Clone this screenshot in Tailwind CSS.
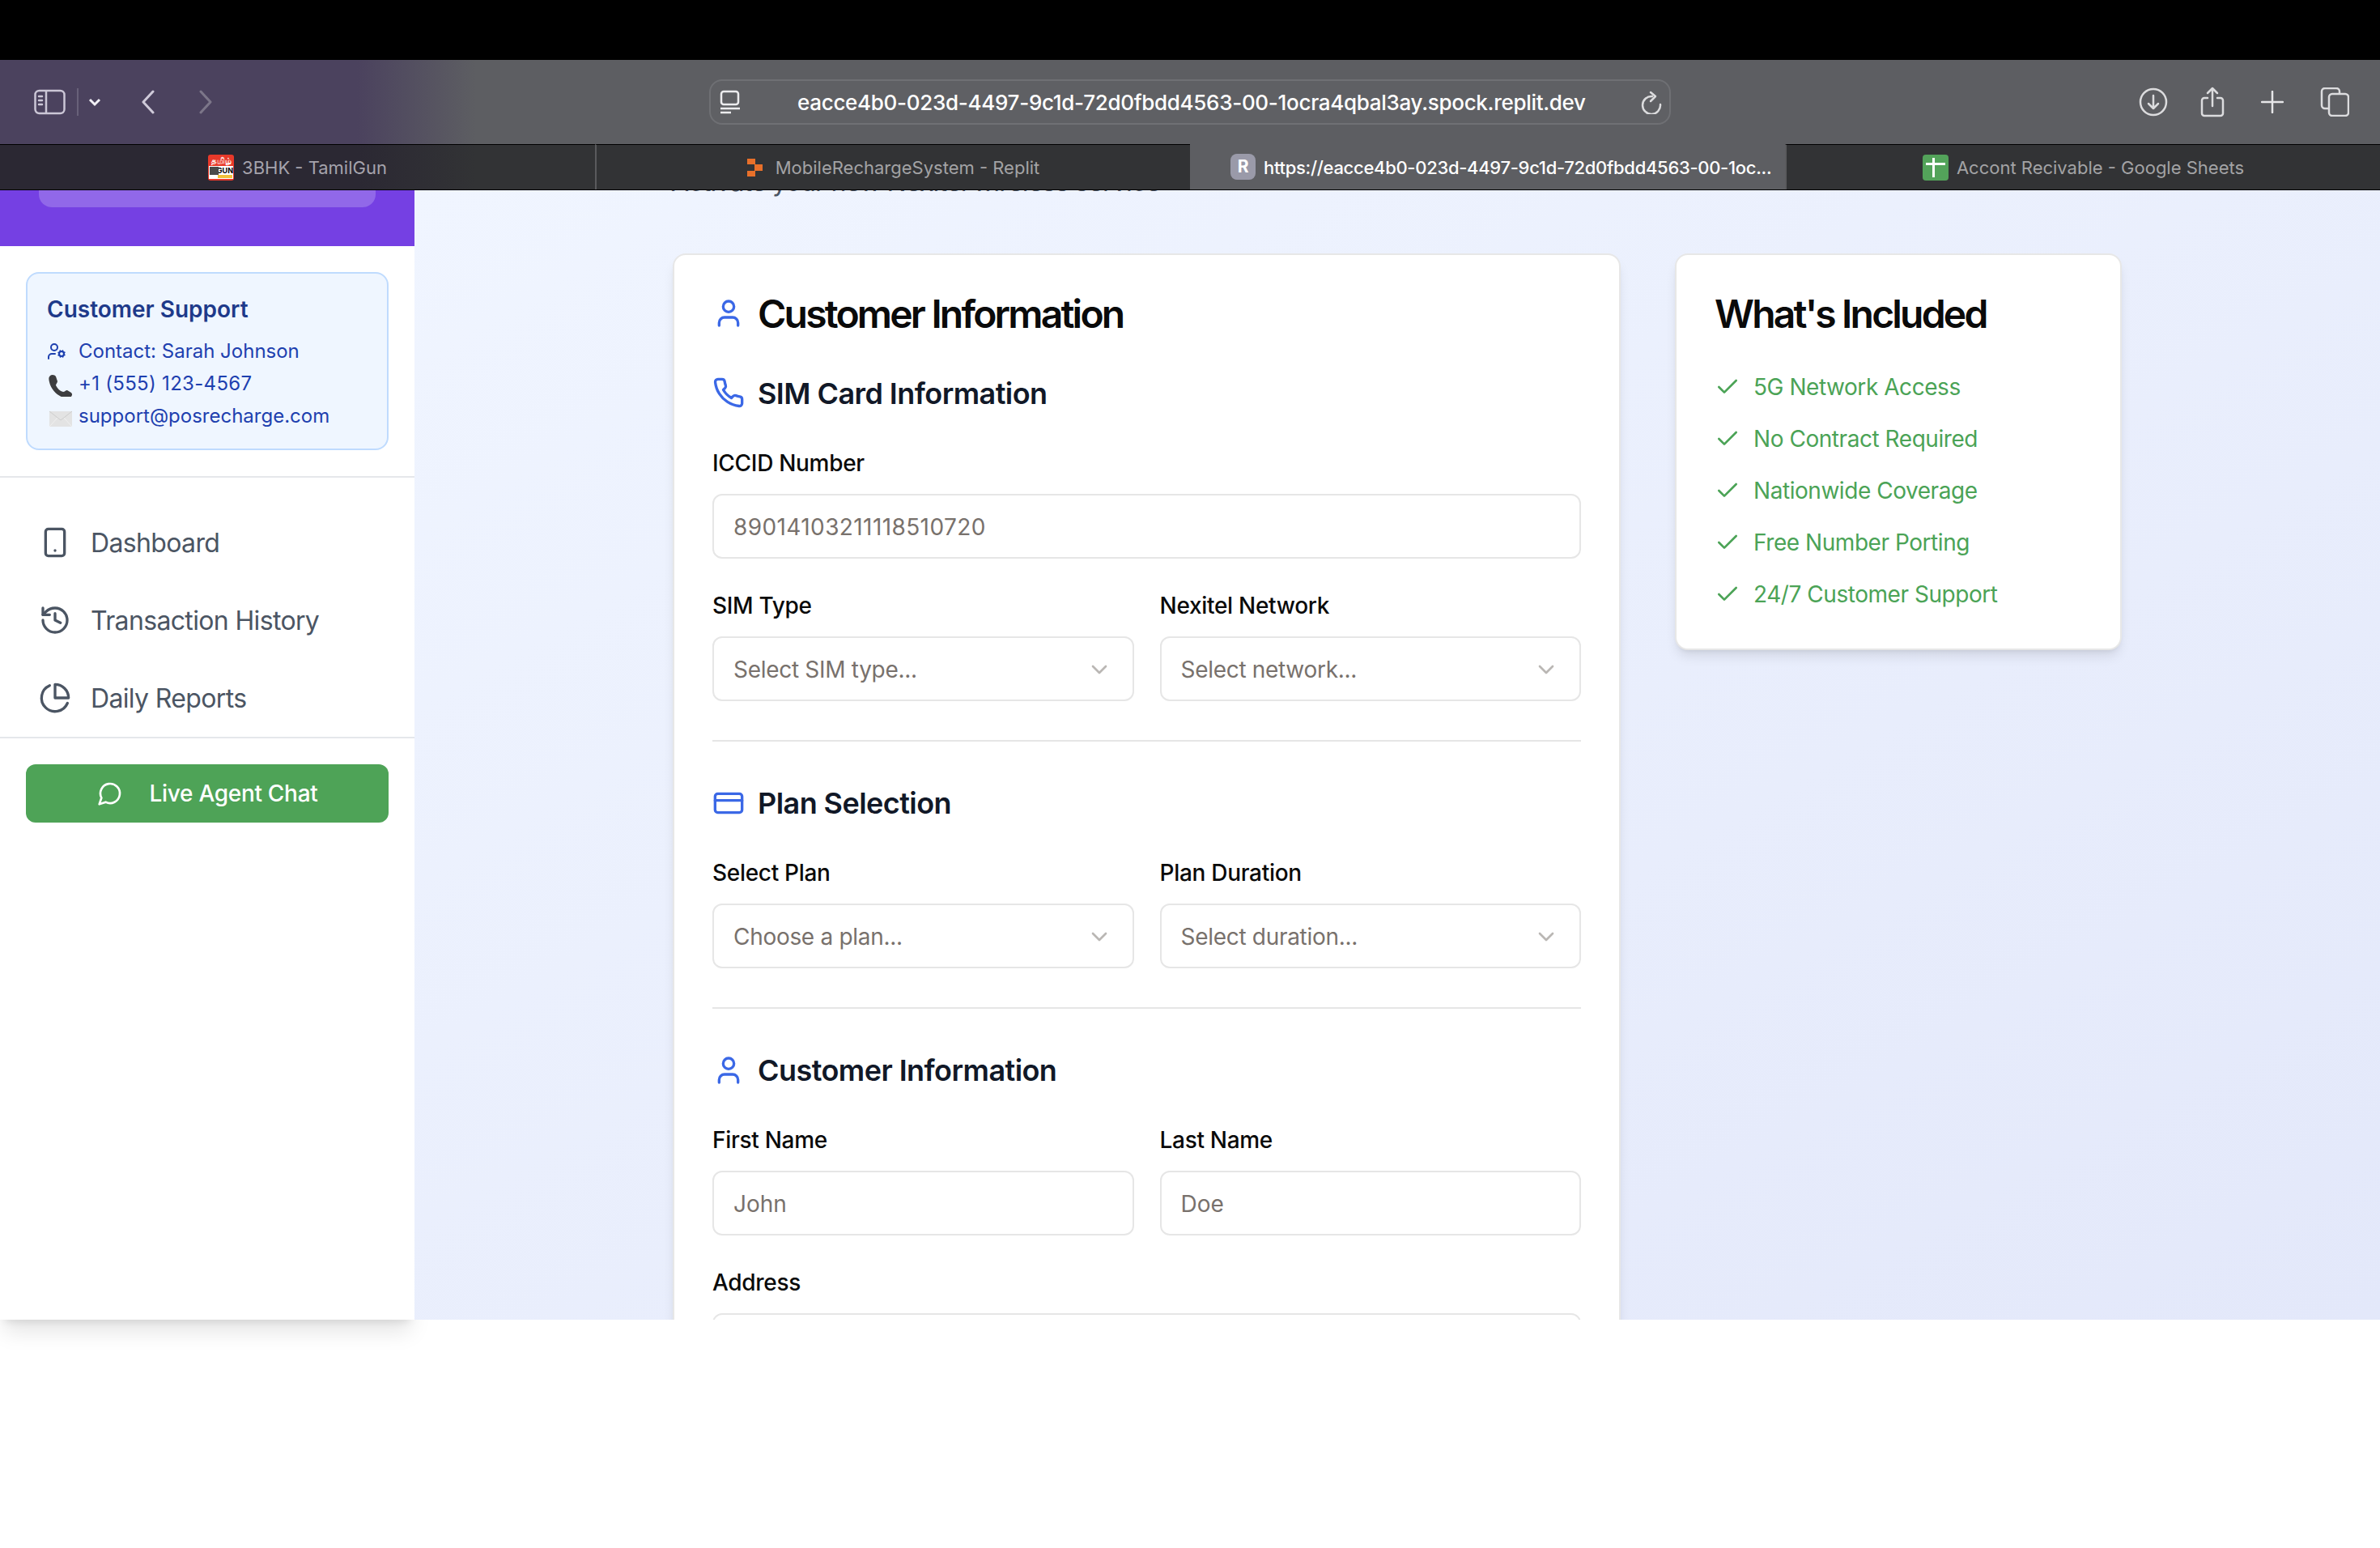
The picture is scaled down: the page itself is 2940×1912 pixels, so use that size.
<!DOCTYPE html>
<html lang="en">
<head>
  <meta charset="UTF-8" />
  <title>Activate - POS Recharge</title>
  <script src="https://cdn.jsdelivr.net/npm/@tailwindcss/browser@4"></script>
</head>
<body class="w-[2940px] h-[1912px] bg-white overflow-hidden font-[Inter,sans-serif]">
  <div class="h-[74px] bg-black"></div>

  <!-- browser toolbar -->
  <div class="h-[104px] flex items-center bg-linear-to-r from-[#4b425e] from-15% to-[#5d5e62] to-20%">
    <div class="w-[876px] flex-none flex items-center pl-[42px]">
      <svg class="w-[39px] h-[32px] flex-none" viewBox="0 0 39 32" fill="none" stroke="#cbc6d6" stroke-width="2.5"><rect x="1.5" y="2" width="36" height="28" rx="5"/><path d="M15 2v28"/><path d="M6 9h4M6 14h4M6 19h4" stroke-linecap="round"/></svg>
      <div class="w-[2px] h-[34px] bg-[#686179] ml-[14px]"></div>
      <svg class="w-[16px] h-[12px] ml-[12px] flex-none" viewBox="0 0 16 12" fill="none" stroke="#f2f0f6" stroke-width="3"><path d="m2 3 6 6 6-6"/></svg>
      <svg class="w-[18px] h-[30px] ml-[49px] flex-none" viewBox="0 0 18 30" fill="none" stroke="#cfcad9" stroke-width="3" stroke-linecap="round" stroke-linejoin="round"><path d="M15 2 3 15l12 13"/></svg>
      <svg class="w-[18px] h-[30px] ml-[53px] flex-none" viewBox="0 0 18 30" fill="none" stroke="#7c7689" stroke-width="3" stroke-linecap="round" stroke-linejoin="round"><path d="m3 2 12 13L3 28"/></svg>
    </div>
    <div class="w-[1188px] h-[56px] flex-none flex items-center rounded-[16px] border-2 border-[#6f7074] bg-[#5f6064]">
      <svg class="w-[26px] h-[30px] ml-[11px] flex-none" viewBox="0 0 26 30" fill="none" stroke="#ececee" stroke-width="2.5"><rect x="2" y="2" width="21" height="16" rx="3"/><path d="M1 23h24"/><path d="M1 28h13"/></svg>
      <span class="ml-[70px] text-[26px] tracking-[-0.3px] font-medium text-white whitespace-nowrap">eacce4b0-023d-4497-9c1d-72d0fbdd4563-00-1ocra4qbal3ay.spock.replit.dev</span>
      <svg class="w-[26px] h-[30px] ml-auto mr-[9px] flex-none" viewBox="0 0 26 30" fill="none" stroke="#dcdcde" stroke-width="2.500" stroke-linecap="round" stroke-linejoin="round"><path d="M24 18A11 11 0 1 1 14 8"/><path d="m12 3 6 5-6 6"/></svg>
    </div>
    <div class="flex-1 flex items-center pl-[578px]">
      <svg class="w-[36px] h-[36px] flex-none" viewBox="0 0 36 36" fill="none" stroke="#dcdcde" stroke-width="2.500" stroke-linecap="round" stroke-linejoin="round"><circle cx="18" cy="18" r="16"/><path d="M18 10v16M12 20l6 6 6-6"/></svg>
      <svg class="w-[32px] h-[38px] ml-[39px] flex-none" viewBox="0 0 32 38" fill="none" stroke="#dcdcde" stroke-width="2.500" stroke-linecap="round" stroke-linejoin="round"><path d="M10 14H6a3 3 0 0 0-3 3v16a3 3 0 0 0 3 3h20a3 3 0 0 0 3-3V17a3 3 0 0 0-3-3h-4"/><path d="M16 24V2M10 8l6-6 6 6"/></svg>
      <svg class="w-[28px] h-[28px] ml-[44px] flex-none" viewBox="0 0 28 28" fill="none" stroke="#e6e6e8" stroke-width="2.500" stroke-linecap="round"><path d="M14 1v26M1 14h26"/></svg>
      <svg class="w-[36px] h-[36px] ml-[45px] flex-none" viewBox="0 0 36 36" fill="none" stroke="#dcdcde" stroke-width="2.500"><rect x="11" y="8" width="24" height="27" rx="4"/><path d="M11 26H6a4 4 0 0 1-4-4V5a4 4 0 0 1 4-4h14a4 4 0 0 1 4 4v3"/></svg>
    </div>
  </div>

  <!-- browser tabs -->
  <div class="h-[57px] grid grid-cols-4 border-b border-black bg-linear-to-r from-[#2b2833] from-15% to-[#323335] to-20% text-[22px] whitespace-nowrap">
    <div class="flex items-center justify-center gap-[10px] border-t border-black text-[#a5a3ac]">
      <span class="relative w-[32px] h-[32px] flex-none rounded-[3px] bg-[#e8392a] overflow-hidden">
        <span class="block h-[14px] text-[10px] leading-[14px] font-bold text-white text-center font-['Noto_Sans',sans-serif]">தமிழ்</span>
        <span class="absolute left-[1px] right-[1px] top-[14px] h-[16px] bg-white text-[9px] leading-[11px] font-bold text-black text-right">GUN</span>
        <span class="absolute left-[2px] top-[15px] w-[11px] h-[10px] bg-[#4a4a4a]"></span>
        <span class="absolute left-[12px] right-[2px] bottom-[3px] h-[4px] bg-[#f0c13a]"></span>
      </span>
      <span class="pt-[2px]">3BHK - TamilGun</span>
    </div>
    <div class="flex items-center justify-center gap-[16px] border-t border-l-2 border-t-black border-l-[#5a5a5d] text-[#a3a3a5]">
      <svg class="w-[19px] h-[22px] flex-none" viewBox="0 0 19 22" fill="#e8702a"><path d="M0 0h10v7H0zM9 7h10v8H9zM0 15h10v7H0z"/></svg>
      <span class="pt-[2px]">MobileRechargeSystem - Replit</span>
    </div>
    <div class="flex items-center pl-[50px] gap-[10px] bg-[#5d5e62] text-white font-medium tracking-[-0.3px]">
      <span class="w-[31px] h-[32px] flex-none flex items-center justify-center rounded-[8px] bg-[#9a9aa9] text-[21px] font-bold">R</span>
      <span class="pt-[2px]">https://eacce4b0-023d-4497-9c1d-72d0fbdd4563-00-1oc...</span>
    </div>
    <div class="flex items-center justify-center gap-[10px] border-t border-l-2 border-t-black border-l-[#5a5a5d] text-[#a3a3a5]">
      <span class="relative w-[32px] h-[32px] flex-none rounded-[4px] bg-[#53a35a]">
        <span class="absolute left-[4px] right-[4px] top-[10px] h-[3px] bg-white"></span>
        <span class="absolute left-[12px] top-[4px] bottom-[4px] w-[3px] bg-white"></span>
      </span>
      <span class="pt-[2px]">Accont Recivable - Google Sheets</span>
    </div>
  </div>

  <!-- page -->
  <div class="h-[1395px] flex">
    <aside class="w-[512px] flex-none bg-white shadow-xl">
      <div class="h-[69px] bg-[#7540e3] px-[48px]">
        <div class="h-[21px] rounded-b-[16px] bg-[#9168e9]"></div>
      </div>
      <div class="p-[32px]">
        <div class="h-[220px] rounded-[16px] border-2 border-[#bfdbfe] bg-[#eff6ff] px-[24px] pt-[24px] text-[#1e40af]">
          <h3 class="h-[40px] mb-[16px] text-[28px] leading-[40px] font-semibold text-[#1e3a8a]">Customer Support</h3>
          <div class="flex flex-col gap-[8px] text-[24px] leading-[32px]">
            <div class="flex items-center">
              <svg class="w-[24px] h-[24px] mr-[15px] flex-none" viewBox="0 0 24 24" fill="none" stroke="currentColor" stroke-width="2" stroke-linecap="round" stroke-linejoin="round"><circle cx="18" cy="15" r="3"/><circle cx="9" cy="7" r="4"/><path d="M10 15H6a4 4 0 0 0-4 4v2"/><path d="m21.700 16.400-.9-.3M15.200 13.900l-.9-.3M16.600 18.700l.3-.9M19.100 12.200l.3-.9M19.600 18.700l-.4-1M16.800 12.300l-.4-1M14.300 16.600l1-.4M20.700 13.800l1-.4"/></svg>
              <span>Contact: Sarah Johnson</span>
            </div>
            <div class="flex items-center">
              <svg class="w-[32px] h-[32px] mr-[7px] flex-none" viewBox="0 0 32 32"><path d="M4 6C6 4 10 5 11 7L13 13C13 15 11 16 11 18C13 22 16 25 20 26C22 26 23 24 25 24L30 27C32 29 31 31 29 33C27 34 23 34 20 33C12 30 5 23 3 14C2 10 2 8 4 6Z" fill="#3d3d3f"/></svg>
              <span class="tracking-[0.3px]">+1 (555) 123-4567</span>
            </div>
            <div class="flex items-center">
              <svg class="w-[32px] h-[32px] mr-[7px] flex-none overflow-visible" viewBox="0 0 32 32"><rect x="3" y="10" width="28" height="19" fill="#e3e3e3"/><path d="M3 10 17 21 31 10" fill="none" stroke="#cdcdcd" stroke-width="1"/><path d="M3 29l10-11M31 29 21 18" fill="none" stroke="#f1f1f1" stroke-width="1"/></svg>
              <span>support@posrecharge.com</span>
            </div>
          </div>
        </div>
      </div>
      <div class="border-t-2 border-[#e5e7eb] px-[48px] pt-[32px] text-[32px] tracking-[-0.65px] text-[#4b5563]">
        <a class="h-[96px] flex items-center gap-[24px]">
          <svg class="w-[40px] h-[40px] flex-none" viewBox="0 0 24 24" fill="none" stroke="currentColor" stroke-width="2" stroke-linecap="round" stroke-linejoin="round"><rect width="14" height="20" x="5" y="2" rx="2"/><path d="M12 18h.01"/></svg>
          <span class="pt-[2px]">Dashboard</span>
        </a>
        <a class="h-[96px] flex items-center gap-[24px]">
          <svg class="w-[40px] h-[40px] flex-none" viewBox="0 0 24 24" fill="none" stroke="currentColor" stroke-width="2" stroke-linecap="round" stroke-linejoin="round"><path d="M3 12a9 9 0 1 0 9-9 9.750 9.750 0 0 0-6.740 2.740L3 8"/><path d="M3 3v5h5"/><path d="M12 7v5l4 2"/></svg>
          <span class="pt-[2px]">Transaction History</span>
        </a>
        <a class="h-[96px] flex items-center gap-[24px]">
          <svg class="w-[40px] h-[40px] flex-none" viewBox="0 0 24 24" fill="none" stroke="currentColor" stroke-width="2" stroke-linecap="round" stroke-linejoin="round"><path d="M21.210 15.890A10 10 0 1 1 8 2.830"/><path d="M22 12A10 10 0 0 0 12 2v10z"/></svg>
          <span class="pt-[2px]">Daily Reports</span>
        </a>
      </div>
      <div class="border-t-2 border-[#e5e7eb] p-[32px]">
        <button class="w-full h-[72px] flex items-center justify-center gap-[33px] rounded-[12px] bg-[#4ea357] text-[28px] tracking-[-0.3px] font-medium text-white">
          <svg class="w-[32px] h-[32px] flex-none" viewBox="0 0 24 24" fill="none" stroke="currentColor" stroke-width="2" stroke-linecap="round" stroke-linejoin="round"><path d="M7.900 20A9 9 0 1 0 4 16.100L2 22Z"/></svg>
          <span>Live Agent Chat</span>
        </button>
      </div>
    </aside>

    <main class="flex-1 overflow-hidden bg-linear-to-br from-[#f0f5ff] to-[#e3e8fa] pl-[319px] text-[#0a0a0a]">
      <p class="h-[48px] -mt-[34px] -ml-[2px] mb-[64px] text-[32px] leading-[48px] tracking-[-0.8px] text-[#4b5563] whitespace-nowrap">Activate your new Nexitel wireless service</p>
      <div class="flex items-start gap-[67px]">
        <section class="w-[1171px] flex-none h-[1500px] rounded-[16px] border-2 border-[#e7e7e7] bg-white pl-[47px] pr-[47px] pt-[40px] shadow-lg">
          <h2 class="h-[64px] flex items-center gap-[16px] text-[48px] font-semibold tracking-[-2.800px]">
            <svg class="w-[40px] h-[40px] flex-none text-[#3b68e6]" viewBox="0 0 24 24" fill="none" stroke="currentColor" stroke-width="2" stroke-linecap="round" stroke-linejoin="round"><path d="M19 21v-2a4 4 0 0 0-4-4H9a4 4 0 0 0-4 4v2"/><circle cx="12" cy="7" r="4"/></svg>
            <span class="pt-[2px]">Customer Information</span>
          </h2>
          <h3 class="h-[56px] mt-[38px] flex items-center gap-[16px] text-[36px] font-semibold tracking-[-0.560px] text-[#111827]">
            <svg class="w-[40px] h-[40px] flex-none text-[#3b68e6]" viewBox="0 0 24 24" fill="none" stroke="currentColor" stroke-width="2" stroke-linecap="round" stroke-linejoin="round"><path d="M22 16.920v3a2 2 0 0 1-2.180 2 19.790 19.790 0 0 1-8.630-3.070 19.500 19.500 0 0 1-6-6 19.790 19.790 0 0 1-3.070-8.670A2 2 0 0 1 4.110 2h3a2 2 0 0 1 2 1.720 12.840 12.840 0 0 0 .7 2.810 2 2 0 0 1-.45 2.110L8.090 9.910a16 16 0 0 0 6 6l1.270-1.270a2 2 0 0 1 2.110-.45 12.840 12.840 0 0 0 2.810.7A2 2 0 0 1 22 16.920z"/></svg>
            <span class="pt-[1px]">SIM Card Information</span>
          </h3>
          <label class="block mt-[39px] text-[28px] leading-[40px] tracking-[-0.3px] font-medium">ICCID Number</label>
          <input class="block w-full h-[80px] mt-[18px] px-[24px] pt-[2px] rounded-[12px] border-2 border-[#e6e6e6] text-[28px] tracking-[0.4px] placeholder:text-[#78716c]" placeholder="89014103211118510720" />

          <div class="grid grid-cols-2 gap-x-[32px] mt-[38px]">
            <div>
              <label class="block text-[28px] leading-[40px] tracking-[-0.3px] font-medium">SIM Type</label>
              <div class="h-[80px] mt-[18px] pl-[24px] pr-[25px] pt-[1px] flex items-center justify-between rounded-[12px] border-2 border-[#e6e6e6] text-[28px] tracking-[-0.3px] text-[#78716c]">
                <span>Select SIM type...</span>
                <svg class="w-[32px] h-[32px] flex-none opacity-50" viewBox="0 0 24 24" fill="none" stroke="currentColor" stroke-width="2" stroke-linecap="round" stroke-linejoin="round"><path d="m6 9 6 6 6-6"/></svg>
              </div>
            </div>
            <div>
              <label class="block text-[28px] leading-[40px] tracking-[-0.3px] font-medium">Nexitel Network</label>
              <div class="h-[80px] mt-[18px] pl-[24px] pr-[25px] pt-[1px] flex items-center justify-between rounded-[12px] border-2 border-[#e6e6e6] text-[28px] tracking-[-0.3px] text-[#78716c]">
                <span>Select network...</span>
                <svg class="w-[32px] h-[32px] flex-none opacity-50" viewBox="0 0 24 24" fill="none" stroke="currentColor" stroke-width="2" stroke-linecap="round" stroke-linejoin="round"><path d="m6 9 6 6 6-6"/></svg>
              </div>
            </div>
          </div>

          <div class="h-[2px] my-[48px] bg-[#e6e6e6]"></div>

          <h3 class="h-[56px] flex items-center gap-[16px] text-[36px] font-semibold tracking-[-0.560px] text-[#111827]">
            <svg class="w-[40px] h-[40px] flex-none text-[#3b68e6]" viewBox="0 0 24 24" fill="none" stroke="currentColor" stroke-width="2" stroke-linecap="round" stroke-linejoin="round"><rect width="20" height="14" x="2" y="5" rx="2"/><path d="M2 10h20"/></svg>
            Plan Selection
          </h3>
          <div class="grid grid-cols-2 gap-x-[32px] mt-[38px]">
            <div>
              <label class="block text-[28px] leading-[40px] tracking-[-0.3px] font-medium">Select Plan</label>
              <div class="h-[80px] mt-[18px] pl-[24px] pr-[25px] pt-[1px] flex items-center justify-between rounded-[12px] border-2 border-[#e6e6e6] text-[28px] tracking-[-0.3px] text-[#78716c]">
                <span>Choose a plan...</span>
                <svg class="w-[32px] h-[32px] flex-none opacity-50" viewBox="0 0 24 24" fill="none" stroke="currentColor" stroke-width="2" stroke-linecap="round" stroke-linejoin="round"><path d="m6 9 6 6 6-6"/></svg>
              </div>
            </div>
            <div>
              <label class="block text-[28px] leading-[40px] tracking-[-0.3px] font-medium">Plan Duration</label>
              <div class="h-[80px] mt-[18px] pl-[24px] pr-[25px] pt-[1px] flex items-center justify-between rounded-[12px] border-2 border-[#e6e6e6] text-[28px] tracking-[-0.3px] text-[#78716c]">
                <span>Select duration...</span>
                <svg class="w-[32px] h-[32px] flex-none opacity-50" viewBox="0 0 24 24" fill="none" stroke="currentColor" stroke-width="2" stroke-linecap="round" stroke-linejoin="round"><path d="m6 9 6 6 6-6"/></svg>
              </div>
            </div>
          </div>

          <div class="h-[2px] my-[48px] bg-[#e6e6e6]"></div>

          <h3 class="h-[56px] flex items-center gap-[16px] text-[36px] font-semibold tracking-[-0.560px] text-[#111827]">
            <svg class="w-[40px] h-[40px] flex-none text-[#3b68e6]" viewBox="0 0 24 24" fill="none" stroke="currentColor" stroke-width="2" stroke-linecap="round" stroke-linejoin="round"><path d="M19 21v-2a4 4 0 0 0-4-4H9a4 4 0 0 0-4 4v2"/><circle cx="12" cy="7" r="4"/></svg>
            Customer Information
          </h3>
          <div class="grid grid-cols-2 gap-x-[32px] mt-[38px]">
            <div>
              <label class="block text-[28px] leading-[40px] tracking-[-0.3px] font-medium">First Name</label>
              <input class="block w-full h-[80px] mt-[18px] px-[24px] pt-[2px] rounded-[12px] border-2 border-[#e6e6e6] text-[28px] placeholder:text-[#78716c]" placeholder="John" />
            </div>
            <div>
              <label class="block text-[28px] leading-[40px] tracking-[-0.3px] font-medium">Last Name</label>
              <input class="block w-full h-[80px] mt-[18px] px-[24px] pt-[2px] rounded-[12px] border-2 border-[#e6e6e6] text-[28px] placeholder:text-[#78716c]" placeholder="Doe" />
            </div>
          </div>
          <label class="block mt-[38px] text-[28px] leading-[40px] tracking-[-0.3px] font-medium">Address</label>
          <input class="block w-full h-[80px] mt-[18px] px-[24px] rounded-[12px] border-2 border-[#e6e6e6] text-[28px]" />
        </section>

        <section class="w-[552px] flex-none h-[490px] rounded-[16px] border-2 border-[#e7e7e7] bg-white px-[47px] pt-[40px] shadow-lg">
          <h2 class="h-[64px] pt-[2px] flex items-center text-[48px] font-semibold tracking-[-2.800px]">What's Included</h2>
          <ul class="mt-[27px] text-[28px] tracking-[-0.45px] text-[#4ba356]">
            <li class="h-[64px] flex items-center gap-[16px]">
              <svg class="w-[32px] h-[32px] flex-none" viewBox="0 0 24 24" fill="none" stroke="currentColor" stroke-width="2" stroke-linecap="round" stroke-linejoin="round"><path d="M20 6 9 17l-5-5"/></svg>
              5G Network Access
            </li>
            <li class="h-[64px] flex items-center gap-[16px]">
              <svg class="w-[32px] h-[32px] flex-none" viewBox="0 0 24 24" fill="none" stroke="currentColor" stroke-width="2" stroke-linecap="round" stroke-linejoin="round"><path d="M20 6 9 17l-5-5"/></svg>
              No Contract Required
            </li>
            <li class="h-[64px] flex items-center gap-[16px]">
              <svg class="w-[32px] h-[32px] flex-none" viewBox="0 0 24 24" fill="none" stroke="currentColor" stroke-width="2" stroke-linecap="round" stroke-linejoin="round"><path d="M20 6 9 17l-5-5"/></svg>
              Nationwide Coverage
            </li>
            <li class="h-[64px] flex items-center gap-[16px]">
              <svg class="w-[32px] h-[32px] flex-none" viewBox="0 0 24 24" fill="none" stroke="currentColor" stroke-width="2" stroke-linecap="round" stroke-linejoin="round"><path d="M20 6 9 17l-5-5"/></svg>
              Free Number Porting
            </li>
            <li class="h-[64px] flex items-center gap-[16px]">
              <svg class="w-[32px] h-[32px] flex-none" viewBox="0 0 24 24" fill="none" stroke="currentColor" stroke-width="2" stroke-linecap="round" stroke-linejoin="round"><path d="M20 6 9 17l-5-5"/></svg>
              24/7 Customer Support
            </li>
          </ul>
        </section>
      </div>
    </main>
  </div>
</body>
</html>
